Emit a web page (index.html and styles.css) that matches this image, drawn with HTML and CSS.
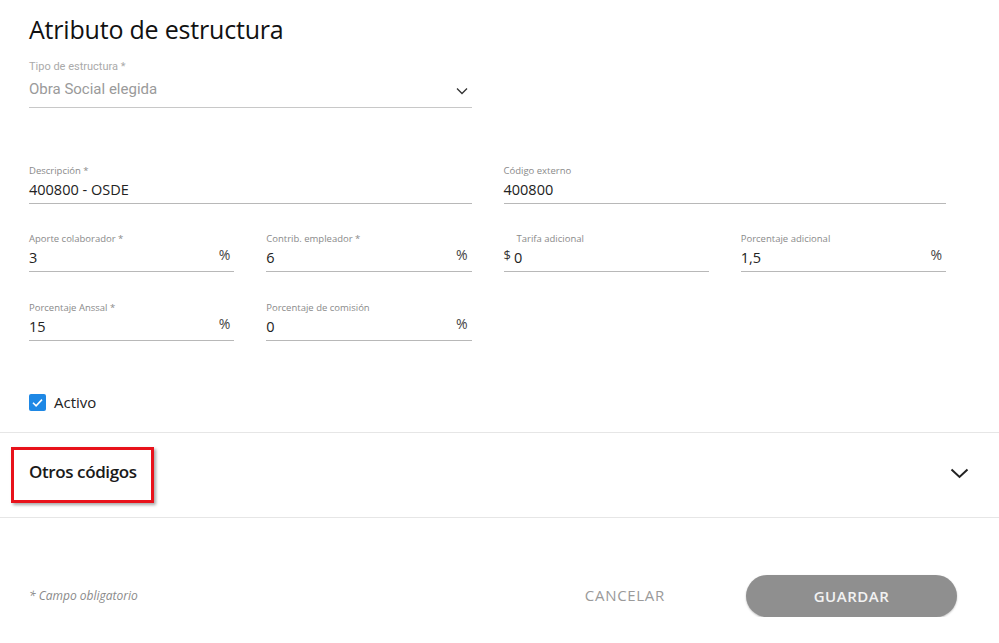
FILE: index.html
```html
<!DOCTYPE html>
<html lang="es">
<head>
<meta charset="utf-8">
<title>Atributo de estructura</title>
<link rel="stylesheet" href="styles.css">
</head>
<body>
<div class="page">
  <div class="content">
    <h1 class="title">Atributo de estructura</h1>

    <div class="grid grid-select">
      <div class="field field-select span2">
        <div class="label label-light">Tipo de estructura *</div>
        <div class="control">
          <span class="value value-muted">Obra Social elegida</span>
          <svg class="chev-small" width="12" height="8" viewBox="0 0 12 8"><path d="M1 1.5 L6 6.5 L11 1.5" fill="none" stroke="#333" stroke-width="1.3"/></svg>
        </div>
      </div>
    </div>

    <div class="grid grid-row2">
      <div class="field span2">
        <div class="label">Descripción *</div>
        <div class="control"><span class="value">400800 - OSDE</span></div>
      </div>
      <div class="field span2">
        <div class="label">Código externo</div>
        <div class="control"><span class="value">400800</span></div>
      </div>
    </div>

    <div class="grid grid-row">
      <div class="field">
        <div class="label">Aporte colaborador *</div>
        <div class="control"><span class="value">3</span><span class="suffix">%</span></div>
      </div>
      <div class="field">
        <div class="label">Contrib. empleador *</div>
        <div class="control"><span class="value">6</span><span class="suffix">%</span></div>
      </div>
      <div class="field">
        <div class="label label-indent">Tarifa adicional</div>
        <div class="control control-prefix"><span class="prefix">$</span><span class="value">0</span></div>
      </div>
      <div class="field">
        <div class="label">Porcentaje adicional</div>
        <div class="control"><span class="value">1,5</span><span class="suffix">%</span></div>
      </div>
    </div>

    <div class="grid grid-row grid-row-last">
      <div class="field">
        <div class="label">Porcentaje Anssal *</div>
        <div class="control"><span class="value">15</span><span class="suffix">%</span></div>
      </div>
      <div class="field">
        <div class="label">Porcentaje de comisión</div>
        <div class="control"><span class="value">0</span><span class="suffix">%</span></div>
      </div>
    </div>

    <label class="checkbox-row">
      <span class="checkbox">
        <svg width="17" height="17" viewBox="0 0 17 17"><path d="M4 8.8 L7.1 11.8 L13 5.6" fill="none" stroke="#fff" stroke-width="1.6"/></svg>
      </span>
      <span class="checkbox-label">Activo</span>
    </label>
  </div>

  <div class="panel">
    <div class="panel-header">
      <span class="panel-title">Otros códigos</span>
      <span class="highlight"></span>
      <svg class="chev-big" width="19" height="11" viewBox="0 0 19 11"><path d="M1.5 1.5 L9.5 9 L17.5 1.5" fill="none" stroke="#222" stroke-width="2"/></svg>
    </div>
  </div>

  <div class="footer">
    <span class="required-note">* Campo obligatorio</span>
    <div class="actions">
      <button class="btn-text" type="button">CANCELAR</button>
      <button class="btn-save" type="button">GUARDAR</button>
    </div>
  </div>
</div>
</body>
</html>
```

FILE: styles.css
```css
* { box-sizing: border-box; }

html, body {
  margin: 0;
  padding: 0;
  background: #ffffff;
}

body {
  font-family: "Open Sans", "Noto Sans", sans-serif;
  color: #222;
}

.page {
  width: 999px;
}

.content {
  padding: 0 53px 0 29px;
}

.title {
  margin: 0;
  padding-top: 11px;
  font-size: 25px;
  line-height: 36px;
  font-weight: 400;
  color: #111;
  letter-spacing: -0.2px;
}

.grid {
  display: grid;
  grid-template-columns: repeat(4, 1fr);
  column-gap: 32px;
}

.span2 { grid-column: span 2; }

.grid-select { margin-top: 13px; }
.grid-row2 { margin-top: 56px; }
.grid-row { margin-top: 28px; }
.grid-row-last { margin-top: 29px; }

.field {
  display: flex;
  flex-direction: column;
}

.label {
  font-size: 9.5px;
  line-height: 14px;
  color: #8a8a8a;
  white-space: nowrap;
}

.label-light {
  font-family: Roboto, "Open Sans", sans-serif;
  font-size: 11px;
  color: #aaa;
}

.label-indent { padding-left: 13px; }

.control {
  display: flex;
  align-items: center;
  height: 26px;
  padding-top: 1px;
  padding-bottom: 2px;
  border-bottom: 1px solid #b8b8b8;
}

.field-select .control {
  margin-top: 4px;
  height: 30px;
  padding-top: 0;
  padding-bottom: 7px;
  border-bottom-color: #c8c8c8;
}

.value {
  flex: 1;
  font-size: 14.5px;
  line-height: 22px;
  color: #222;
}

.value-muted {
  font-family: Roboto, "Open Sans", sans-serif;
  font-size: 15px;
  color: #9a9a9a;
}

.chev-small { margin-right: 4px; margin-top: 4px; }

.suffix {
  font-size: 14px;
  line-height: 22px;
  color: #444;
  margin-right: 4px;
  margin-top: -6px;
}

.prefix {
  font-size: 13px;
  line-height: 22px;
  color: #333;
  margin-top: -6px;
  margin-right: 3px;
}

.checkbox-row {
  display: flex;
  align-items: center;
  gap: 8px;
  margin-top: 50px;
  height: 22px;
}

.checkbox {
  width: 17px;
  height: 17px;
  border-radius: 2px;
  background: #1e88e5;
  display: flex;
}

.checkbox-label {
  font-size: 15px;
  line-height: 22px;
  color: #222;
}

.panel {
  margin-top: 19px;
  border-top: 1px solid #e6e6e6;
  border-bottom: 1px solid #e6e6e6;
}

.panel-header {
  position: relative;
  height: 84px;
  display: flex;
  align-items: center;
  justify-content: space-between;
  padding: 0 30px 0 29px;
}

.panel-title {
  font-size: 17px;
  line-height: 24px;
  font-weight: 600;
  color: #1a1a1a;
  letter-spacing: -0.4px;
  margin-top: -6px;
}

.highlight {
  position: absolute;
  left: 11px;
  top: 14px;
  width: 143px;
  height: 56px;
  border: 3px solid #e8121b;
  box-shadow: 2px 2px 3px rgba(0,0,0,0.35);
  pointer-events: none;
}

.chev-big { margin-top: -4px; }

.footer {
  display: flex;
  align-items: center;
  justify-content: space-between;
  padding: 0 42px 0 29px;
  margin-top: 57px;
}

.required-note {
  font-size: 12px;
  font-style: italic;
  color: #8a8a8a;
  margin-top: -2px;
}

.actions {
  display: flex;
  align-items: center;
  gap: 81px;
}

.btn-text {
  border: 0;
  background: transparent;
  font-family: "Open Sans", sans-serif;
  font-size: 15px;
  letter-spacing: 0.7px;
  color: #9a9a9a;
  padding: 0;
  margin-top: -2px;
}

.btn-save {
  width: 211px;
  height: 42px;
  border: 0;
  border-radius: 21px;
  background: #8f8f8f;
  color: #f2f2f2;
  font-family: "Open Sans", sans-serif;
  font-size: 15px;
  font-weight: 600;
  letter-spacing: 0.5px;
  padding-bottom: 2px;
  box-shadow: 0 1px 2px rgba(0,0,0,0.25);
}
```
